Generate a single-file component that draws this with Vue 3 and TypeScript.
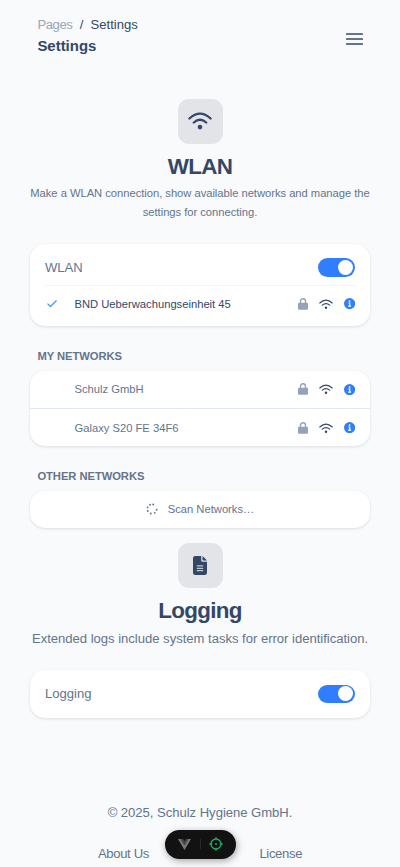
<script setup lang="ts">
import { ref } from 'vue'

interface Network {
  name: string
}

const wlanEnabled = ref(true)
const loggingEnabled = ref(true)
const knownNetworks: Network[] = [{ name: 'Schulz GmbH' }, { name: 'Galaxy S20 FE 34F6' }]
const dots = [-115, -160, 155, 105, 55, 10, -75].map((deg) => ({
  x: 6 + 4.7 * Math.cos((deg * Math.PI) / 180),
  y: 6 + 4.7 * Math.sin((deg * Math.PI) / 180),
}))
</script>

<template>
  <svg class="symbols" aria-hidden="true">
    <symbol id="lock" viewBox="0 0 10 12">
      <path d="M2.5 5.5V3.3a2.5 2.5 0 0 1 5 0v2.2" fill="none" stroke="currentColor" stroke-width="1.4" />
      <rect x="0" y="4.7" width="10" height="7" rx="1.3" fill="currentColor" />
    </symbol>
    <symbol id="wifi" viewBox="0 0 24 18">
      <path d="M1.3 6.8Q12-2.9 22.7 6.8M5.6 10.6Q12 4.9 18.4 10.6" fill="none" stroke="currentColor" stroke-width="2" stroke-linecap="round" />
      <circle cx="12" cy="15" r="2.1" fill="currentColor" />
    </symbol>
    <symbol id="info" viewBox="0 0 12 12">
      <circle cx="6" cy="6" r="6" fill="#2f7eff" />
      <circle cx="6" cy="3.3" r=".95" fill="#fff" />
      <path d="M4.7 5.4h1.5v3.3M4.4 8.7h3.2" fill="none" stroke="#fff" stroke-width="1.2" />
    </symbol>
  </svg>
  <div class="page">
    <header class="topbar">
      <div>
        <nav class="crumbs"><span class="muted">Pages</span><span class="slash">/</span><span>Settings</span></nav>
        <h6>Settings</h6>
      </div>
      <button class="menu" aria-label="Menu"><i></i><i></i><i></i></button>
    </header>

    <main>
      <section class="intro">
        <div class="tile">
          <svg class="tile-wifi" viewBox="0 0 24 18">
            <path d="M1.4 6.5Q12-3.3 22.6 6.5M5.8 10.5Q12 5 18.2 10.5" fill="none" stroke="currentColor" stroke-width="2.3" stroke-linecap="round" />
            <circle cx="12" cy="15.1" r="2.3" fill="currentColor" />
          </svg>
        </div>
        <h2>WLAN</h2>
        <p class="small">Make a WLAN connection, show available networks and manage the settings for connecting.</p>
      </section>

      <div class="card wlan">
        <div class="setting">
          <span>WLAN</span>
          <button class="switch" :class="{ on: wlanEnabled }" aria-label="WLAN" @click="wlanEnabled = !wlanEnabled"><i></i></button>
        </div>
        <div class="network active">
          <span class="mark"><svg viewBox="0 0 12 9"><path d="M1.5 4.6 4.5 7.5 10.5 1.5" /></svg></span>
          <span class="name">BND Ueberwachungseinheit 45</span>
          <svg class="lock"><use href="#lock" /></svg>
          <svg class="wifi"><use href="#wifi" /></svg>
          <svg class="info"><use href="#info" /></svg>
        </div>
      </div>

      <h5>MY NETWORKS</h5>
      <div class="card list">
        <div v-for="n in knownNetworks" :key="n.name" class="network">
          <span class="mark"></span>
          <span class="name">{{ n.name }}</span>
          <svg class="lock"><use href="#lock" /></svg>
          <svg class="wifi"><use href="#wifi" /></svg>
          <svg class="info"><use href="#info" /></svg>
        </div>
      </div>

      <h5>OTHER NETWORKS</h5>
      <div class="card scan">
        <svg class="spinner" viewBox="0 0 12 12"><circle v-for="(d, i) in dots" :key="i" :cx="d.x" :cy="d.y" r=".95" /></svg>
        <span>Scan Networks…</span>
      </div>

      <section class="intro second">
        <div class="tile">
          <svg class="doc" viewBox="0 0 14 19">
            <path fill="currentColor" d="M2.3 0H8.2V4.2a1.5 1.5 0 0 0 1.5 1.5H14V16.7A2.3 2.3 0 0 1 11.7 19H2.3A2.3 2.3 0 0 1 0 16.7V2.3A2.3 2.3 0 0 1 2.3 0Z" />
            <path fill="currentColor" d="M9.5 0 14 4.5H10.3a.8.8 0 0 1-.8-.8Z" />
            <path d="M3.8 9.9h6.4M3.8 12.3h6.4M3.8 14.7h6.4" stroke="#e3e4e8" stroke-width="1" />
          </svg>
        </div>
        <h2>Logging</h2>
        <p>Extended logs include system tasks for error identification.</p>
      </section>

      <div class="card logging">
        <div class="setting">
          <span>Logging</span>
          <button class="switch" :class="{ on: loggingEnabled }" aria-label="Logging" @click="loggingEnabled = !loggingEnabled"><i></i></button>
        </div>
      </div>
    </main>

    <footer>
      <div class="copy">© 2025, Schulz Hygiene GmbH.</div>
      <div class="links"><a>About Us</a><a>License</a></div>
    </footer>

    <div class="devtools">
      <svg class="vue" viewBox="0 0 13 11"><path d="M0 0H2.8L6.5 6.3 10.2 0H13L6.5 11Z" fill="#777" /><path d="M2.8 0H5L6.5 2.6 8 0h2.2L6.5 6.3Z" fill="#484848" /></svg>
      <span class="bar"></span>
      <svg class="target" viewBox="0 0 14 14"><g fill="none" stroke="#22aa61" stroke-width="1.3"><circle cx="7" cy="7" r="5" /><path d="M7 .3v3M7 10.7v3M.3 7h3M10.7 7h3" /></g><circle cx="7" cy="7" r="1" fill="#22aa61" /></svg>
    </div>
  </div>
</template>

<style>
body {
  margin: 0;
  background: #f8fafc;
}
</style>

<style scoped>
* {
  box-sizing: border-box;
}
.symbols {
  position: absolute;
  width: 0;
  height: 0;
}
.page {
  position: relative;
  height: 867px;
  overflow: hidden;
  background: #f8fafc;
  color: #64748b;
  font: 13.08px/20px "Liberation Sans", Arial, sans-serif;
}
h2, h5, h6, p {
  margin: 0;
}
button {
  padding: 0;
  border: 0;
  background: none;
}
svg {
  display: block;
  flex: none;
}
.topbar {
  display: flex;
  justify-content: space-between;
  height: 99.4px;
  padding: 15px 37.4px 0;
  color: #344767;
}
.crumbs {
  display: flex;
}
.muted {
  color: #9aa5b8;
  letter-spacing: -0.4px;
}
.slash {
  padding: 0 7.2px;
}
h6 {
  font-size: 14.95px;
  line-height: 22px;
}
.menu {
  display: flex;
  flex-direction: column;
  gap: 3px;
  width: 16.5px;
  height: 12px;
  margin-top: 18px;
}
.menu i {
  height: 2px;
  border-radius: 0.5px;
  background: #64748b;
}
main {
  padding: 0 29.9px;
}
.intro {
  height: 144.6px;
  text-align: center;
}
.intro.second {
  height: 142px;
  padding-top: 15px;
}
.intro p {
  white-space: nowrap;
  margin: 0 -4px;
}
.intro.second p {
  letter-spacing: -0.02px;
}
.intro p.small {
  margin: 0 -1px;
  padding-top: 3px;
  font-size: 11.21px;
  line-height: 19px;
  white-space: normal;
  letter-spacing: -0.03px;
}
.intro.second h2 {
  margin-top: 9px;
  margin-bottom: 4.2px;
}
.tile {
  display: grid;
  place-items: center;
  width: 45px;
  height: 45px;
  margin: 0 auto;
  border-radius: 11.2px;
  background: #e3e4e8;
  color: #344767;
}
.tile-wifi {
  width: 24px;
  height: 18px;
  margin-top: -2px;
}
.doc {
  width: 14px;
  height: 19px;
}
h2 {
  margin-top: 8.6px;
  color: #344767;
  font-size: 22.4px;
  line-height: 28px;
  letter-spacing: -0.7px;
}
h5 {
  height: 45px;
  padding: 20px 7.5px 0;
  font-size: 11.21px;
  line-height: 20px;
  letter-spacing: -0.05px;
}
.card {
  overflow: hidden;
  border-radius: 15px;
  background: #fff;
  box-shadow: 0 1px 3px rgb(20 20 20 / 12%);
}
.wlan {
  height: 82px;
  padding: 6px 15px 0;
}
.setting {
  display: flex;
  align-items: center;
  justify-content: space-between;
  height: 36px;
}
.wlan .setting {
  border-bottom: 1.5px solid #f3f4f6;
}
.wlan .setting span {
  padding-top: 1px;
}
.switch {
  display: flex;
  align-items: center;
  width: 37.4px;
  height: 18.7px;
  padding: 0 1.9px;
  border-radius: 10px;
  background: #cbd5e1;
}
.switch.on {
  justify-content: flex-end;
  background: #2f7eff;
}
.switch i {
  width: 15px;
  height: 15px;
  border-radius: 50%;
  background: #fff;
}
.network {
  display: flex;
  align-items: center;
  height: 37px;
  padding: 0 15px;
  font-size: 11.21px;
}
.network.active {
  height: 36px;
  padding: 0;
  color: #344767;
}
.mark {
  width: 29.6px;
}
.mark svg {
  width: 12px;
  height: 9px;
  margin-left: 1.5px;
}
.mark path {
  fill: none;
  stroke: #439bf5;
  stroke-width: 1.25;
}
.name {
  flex: 1;
}
.lock {
  width: 10px;
  height: 12px;
  color: #94a3b8;
}
.wifi {
  width: 14px;
  height: 10.5px;
  margin: 0 11px;
  color: #344767;
}
.info {
  width: 11.2px;
  height: 11.2px;
}
.list .network + .network {
  height: 38px;
  padding-top: 0.8px;
  border-top: 1px solid #e2e8f0;
}
.scan {
  display: flex;
  align-items: center;
  justify-content: center;
  gap: 10px;
  height: 37px;
  font-size: 11.21px;
}
.spinner {
  width: 12px;
  height: 12px;
  fill: #64748b;
}
.logging {
  height: 48px;
  padding: 6px 15px;
}
footer {
  padding-top: 85px;
  text-align: center;
}
.copy {
  letter-spacing: -0.03px;
}
.links {
  display: flex;
  justify-content: center;
  gap: 110.5px;
  padding-top: 21px;
  letter-spacing: -0.35px;
}
.devtools {
  position: absolute;
  left: 164.5px;
  top: 830px;
  display: flex;
  align-items: center;
  width: 71px;
  height: 28.5px;
  padding: 0 12.5px 0 13px;
  border-radius: 15px;
  background: #121212;
  box-shadow: 1px 2px 7px rgb(0 0 0 / 35%);
}
.vue {
  width: 13px;
  height: 11px;
}
.bar {
  width: 1px;
  height: 10px;
  margin: 0 8.5px 0 9.5px;
  background: #292929;
}
.target {
  width: 14px;
  height: 14px;
}
</style>
